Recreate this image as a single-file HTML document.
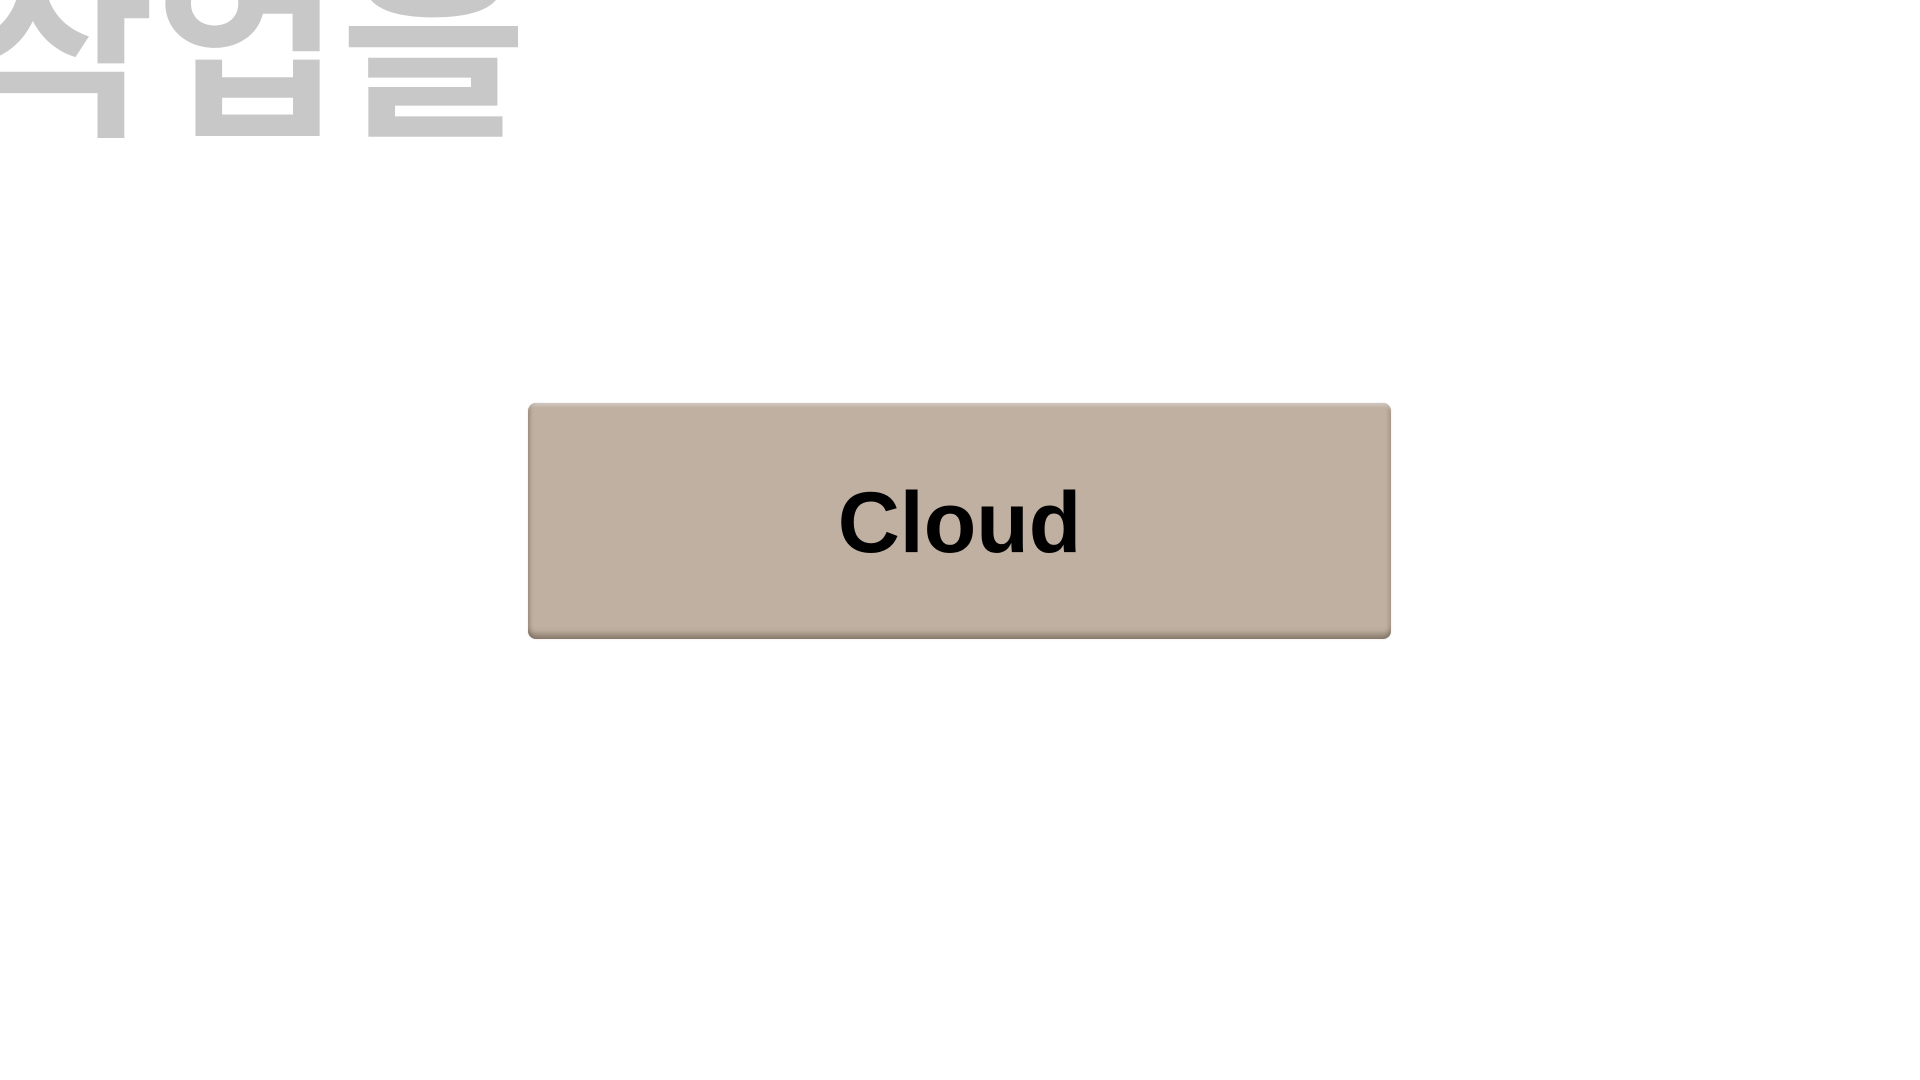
<!DOCTYPE html>
<html><head><meta charset="utf-8"><style>
html,body{margin:0;padding:0;width:1920px;height:1080px;background:#fff;overflow:hidden;position:relative}
.kr{position:absolute;left:-31px;top:-51px;font-family:"Liberation Sans","Noto Sans CJK KR",sans-serif;font-weight:700;font-size:202px;line-height:1;color:#c8c8c8;white-space:nowrap}
.btn{position:absolute;left:528px;top:403px;width:863px;height:236px;background:#bfb0a1;border-radius:8px;box-shadow:inset 0 -7px 6px -2px rgba(90,75,60,.5),inset 3px 0 3px -1px rgba(90,75,60,.3),inset -3px 0 3px -1px rgba(90,75,60,.2),inset 0 3px 3px -1px rgba(255,255,255,.5),0 0 2px rgba(0,0,0,.1);display:flex;align-items:center;justify-content:center;font-family:"Liberation Sans",sans-serif;font-weight:700;font-size:86px;color:#000;padding-top:4px;box-sizing:border-box}
</style></head><body>
<div class="kr">작업을</div>
<div class="btn">Cloud</div>
</body></html>
